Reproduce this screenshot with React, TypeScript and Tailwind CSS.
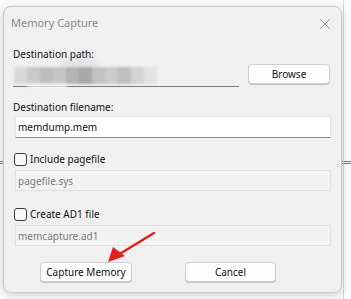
import React from 'react';

const font = { fontFamily: '"Noto Sans", "Open Sans", sans-serif' };

// blurred path value, drawn as soft grey blocks
const blurBlocks = ['#d9d9d9', '#c9c9c9', '#bdbdbd', '#c4c4c4', '#b3b3b3', '#a9a9a9', '#c2c2c2', '#cbcbcb', '#bfbfbf', '#d4d4d4', '#e2e2e2'];

const Checkbox: React.FC<{ label: string }> = ({ label }) => (
  <div className="flex items-center h-[16px] ml-[10px]">
    <div className="w-[13px] h-[13px] rounded-[3px] border border-[#3a3a3a] bg-[#f7f7f7]" />
    <span className="ml-[3px] text-[10px] text-[#111] leading-[16px]">{label}</span>
  </div>
);

const DisabledInput: React.FC<{ value: string }> = ({ value }) => (
  <div className="ml-[11px] w-[316px] h-[21px] border border-[#e0e0e0] bg-[#f2f2f2] flex items-center pl-[2px]">
    <span className="text-[10px] text-[#7a7a7a] leading-none">{value}</span>
  </div>
);

const Button: React.FC<{ label: string; className?: string }> = ({ label, className }) => (
  <button className={`h-[20px] whitespace-nowrap rounded-[4px] border border-[#d0d0d0] bg-[#fdfdfd] text-[10px] text-[#111] leading-none shadow-[0_1px_0_#c4c4c4] ${className ?? ''}`}>
    {label}
  </button>
);

export default function App() {
  return (
    <div className="relative w-[351px] h-[299px] bg-[#fbfbfb] overflow-hidden pt-[6px] pl-[3px]" style={font}>
      {/* window behind the dialog */}
      <div className="absolute left-0 top-[161px] w-[4px] h-[3px] border-y border-[#8a8a8a]" />
      <div className="absolute left-[342px] top-[161px] w-[9px] h-[3px] border-y border-[#7a7a7a]" />
      <div className="absolute left-[343px] top-0 w-[1px] h-[299px] bg-[#d8d8d8]" />

      <div className="relative w-[339px] h-[287px] rounded-[8px] border border-[#c9c9c9] bg-[#f0f0f0] shadow-[0_2px_8px_rgba(0,0,0,0.18)]">
        {/* title bar */}
        <div className="flex items-center justify-between h-[33px] pl-[7px] pr-[9px]">
          <span className="text-[11px] text-[#8a8a8a]">Memory Capture</span>
          <svg width="12" height="12" viewBox="0 0 12 12" className="mr-[1px]">
            <path d="M1 1 L11 11 M11 1 L1 11" stroke="#9a9a9a" strokeWidth="1" />
          </svg>
        </div>

        <div className="relative z-10 text-[10px] text-[#111] leading-[16px] mt-[6px] ml-[9px]">Destination path:</div>
        <div className="flex items-start mt-[2px]">
          <div className="relative ml-[9px] w-[226px] h-[23px] border-b border-[#7a7a7a] flex items-center pl-[1px]">
            <div className="absolute left-[48px] top-[-6px] w-[36px] h-[10px] bg-[#e4e4e4] blur-[2px]" />
            <div className="relative flex h-[17px] blur-[1px]">
              {blurBlocks.map((c, i) => (
                <div key={i} className="w-[13px] h-full" style={{ backgroundColor: c }} />
              ))}
            </div>
            <div className="absolute left-[14px] bottom-[-3px] w-[40px] h-[5px] bg-[#f0f0f0] blur-[2px]" />
          </div>
          <Button label="Browse" className="ml-[9px] w-[82px]" />
        </div>

        <div className="text-[10px] text-[#111] leading-[16px] mt-[12px] ml-[9px]">Destination filename:</div>
        <div className="ml-[11px] mt-[1px] w-[316px] h-[22px] bg-white border border-[#e6e6e6] border-b-[#8a8a8a] flex items-center pl-[2px]">
          <span className="text-[10px] text-[#111] leading-none">memdump.mem</span>
        </div>

        <div className="mt-[13px]">
          <Checkbox label="Include pagefile" />
        </div>
        <div className="mt-[3px]">
          <DisabledInput value="pagefile.sys" />
        </div>

        <div className="mt-[15px]">
          <Checkbox label="Create AD1 file" />
        </div>
        <div className="mt-[3px]">
          <DisabledInput value="memcapture.ad1" />
        </div>

        <div className="flex mt-[16px]">
          <Button label="Capture Memory" className="ml-[36px] w-[92px]" />
          <Button label="Cancel" className="ml-[53px] w-[91px]" />
        </div>
      </div>

      {/* red annotation arrow */}
      <svg className="absolute left-0 top-0" width="351" height="299" viewBox="0 0 351 299">
        <path d="M154 233 L118 255" stroke="#e02020" strokeWidth="2.5" strokeLinecap="round" />
        <path d="M108 262 L113 247 L125 256 Z" fill="#e02020" />
      </svg>
    </div>
  );
}
